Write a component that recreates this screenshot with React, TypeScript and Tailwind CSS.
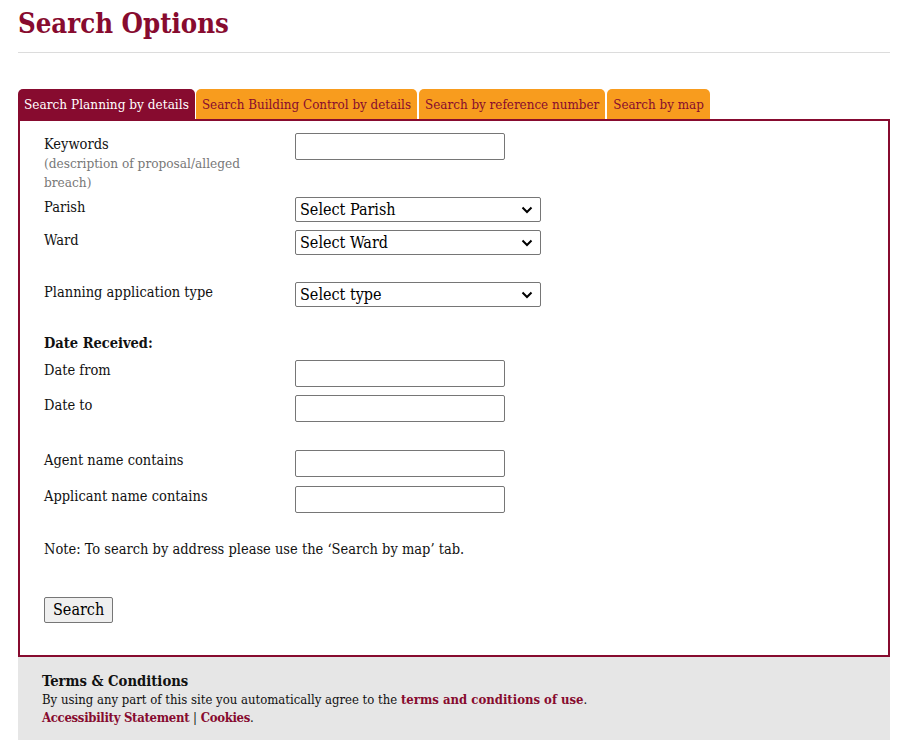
import React from "react";

const F = '"DejaVu Serif Condensed", "DejaVu Serif", serif';

function Chevron() {
  return (
    <svg className="pointer-events-none absolute right-[8px] top-[9px]" width="12" height="8" viewBox="0 0 12 8">
      <path d="M1.5 1.5 L6 6 L10.5 1.5" fill="none" stroke="#000" strokeWidth="2" />
    </svg>
  );
}

function Sel({ label }: { label: string }) {
  return (
    <div className="relative w-[246px] h-[25px]">
      <select
        className="appearance-none w-full h-full border border-[#767676] rounded-[2px] bg-white pl-[4px] text-[16px] text-black"
        style={{ fontFamily: F }}
      >
        <option>{label}</option>
      </select>
      <Chevron />
    </div>
  );
}

function Txt() {
  return <input type="text" className="w-[210px] h-[27px] border border-[#767676] rounded-[2px] bg-white" />;
}

function Row({ label, children, className = "" }: { label: React.ReactNode; children: React.ReactNode; className?: string }) {
  return (
    <div className={"flex " + className}>
      <div className="w-[251px] shrink-0 text-[14.5px] leading-[20px] text-[#111]">{label}</div>
      <div>{children}</div>
    </div>
  );
}

export default function App() {
  const tabs = [
    { t: "Search Planning by details", active: true },
    { t: "Search Building Control by details" },
    { t: "Search by reference number" },
    { t: "Search by map" },
  ];
  return (
    <div className="bg-white w-[899px] min-h-[744px] px-[18px] pt-[6px]" style={{ fontFamily: F }}>
      <h1 className="text-[27.3px] leading-[34px] font-bold text-[#870b2f]">Search Options</h1>
      <div className="mt-[12px] border-t border-[#dcdcdc] w-[872px]" />
      <div className="mt-[36px] flex gap-[2px] items-end">
        {tabs.map((x, i) => (
          <div
            key={x.t}
            className={
              "h-[30px] px-[6px] rounded-t-[5px] leading-[31px] whitespace-nowrap " +
              (x.active ? "bg-[#870b2f] text-white text-[13.5px] mr-[-1px]" : "bg-[#f89c1e] text-[#870b2f] text-[13.3px]") +
              (i === 1 ? " pl-[6px]" : "")
            }
          >
            {x.t}
          </div>
        ))}
      </div>
      <div className="w-[872px] border-2 border-[#870b2f] pl-[24px] pt-[12px] pb-[32px]">
        <Row
          label={
            <div className="pt-[1px]">
              <div>Keywords</div>
              <div className="text-[13.5px] leading-[19px] text-[#777] w-[215px]">(description of proposal/alleged breach)</div>
            </div>
          }
        >
          <Txt />
        </Row>
        <Row label="Parish" className="mt-[5px]">
          <Sel label="Select Parish" />
        </Row>
        <Row label="Ward" className="mt-[8px]">
          <Sel label="Select Ward" />
        </Row>
        <Row label="Planning application type" className="mt-[27px]">
          <Sel label="Select type" />
        </Row>
        <div className="mt-[26px] text-[14.5px] leading-[20px] font-bold text-[#111]">Date Received:</div>
        <Row label="Date from" className="mt-[7px]">
          <Txt />
        </Row>
        <Row label="Date to" className="mt-[8px]">
          <Txt />
        </Row>
        <Row label="Agent name contains" className="mt-[28px]">
          <Txt />
        </Row>
        <Row label="Applicant name contains" className="mt-[9px]">
          <Txt />
        </Row>
        <div className="mt-[26px] text-[14.5px] leading-[20px] text-[#111]">
          Note: To search by address please use the ‘Search by map’ tab.
        </div>
        <button
          className="mt-[38px] h-[26px] px-[8px] border border-[#767676] rounded-[2px] bg-[#efefef] text-[16px] leading-[22px] text-black"
          style={{ fontFamily: F }}
        >
          Search
        </button>
      </div>
      <div className="w-[872px] bg-[#e6e6e6] pl-[24px] pt-[13px] pb-[13px]">
        <div className="text-[14.7px] leading-[21px] font-bold text-[#111]">Terms &amp; Conditions</div>
        <div className="text-[13px] leading-[18px] text-[#111]">
          By using any part of this site you automatically agree to the{" "}
          <span className="font-bold text-[#870b2f] tracking-[0px]">terms and conditions of use</span>.
        </div>
        <div className="text-[13px] leading-[18px] text-[#111]">
          <span className="font-bold text-[#870b2f] tracking-[-0.3px]">Accessibility Statement</span> |{" "}
          <span className="font-bold text-[#870b2f] tracking-[-0.3px]">Cookies</span>.
        </div>
      </div>
    </div>
  );
}
